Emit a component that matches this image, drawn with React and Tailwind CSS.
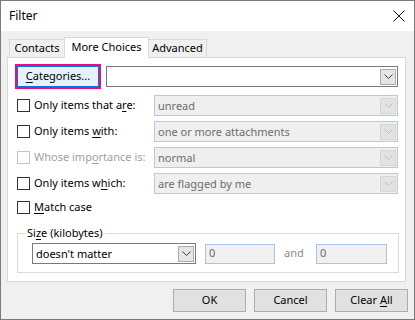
import React from 'react';

function Chevron({ disabled }) {
  return (
    <svg width="9" height="5" viewBox="0 0 9 5" className="block">
      <path d="M0.5 0.5 L4.5 4.5 L8.5 0.5" fill="none" stroke={disabled ? '#bdbdbd' : '#3c3c3c'} strokeWidth="1" />
    </svg>
  );
}

function Combo({ text, disabled, className = '' }) {
  return (
    <div
      className={`flex items-center justify-between border ${
        disabled ? 'border-[#b7c9dd] bg-[#efefef] text-[#6d6d6d]' : 'border-[#7a7a7a] bg-white text-black'
      } ${className}`}
    >
      <span className="overflow-hidden whitespace-nowrap pl-[3px] leading-[16px]">{text}</span>
      <div
        className={`mr-[1px] flex h-[16px] w-[16px] shrink-0 items-center justify-center border ${
          disabled ? 'border-[#d6d6d6] bg-[#e3e3e3]' : 'border-[#acacac] bg-[#e5e5e5]'
        }`}
      >
        <Chevron disabled={disabled} />
      </div>
    </div>
  );
}

function Check({ disabled }) {
  return (
    <div
      className={`h-[13px] w-[13px] shrink-0 border bg-white ${disabled ? 'border-[#c4c4c4]' : 'border-[#333333]'}`}
    />
  );
}

function U({ children }) {
  return <span className="underline decoration-1 underline-offset-[2px]">{children}</span>;
}

const rows = [
  { label: <>Only items that a<U>r</U>e:</>, value: 'unread', mt: 'mt-[6px]' },
  { label: <>Only items <U>w</U>ith:</>, value: 'one or more attachments', mt: 'mt-[5px]' },
  { label: <>Whose imp<U>o</U>rtance is:</>, value: 'normal', mt: 'mt-[5px]', off: true },
  { label: <>Only items w<U>h</U>ich:</>, value: 'are flagged by me', mt: 'mt-[5px]' },
];

export default function App() {
  return (
    <div className="flex h-[320px] w-[415px] flex-col border border-[#7a7a7a] bg-[#f0f0f0] font-['Noto_Sans',sans-serif] text-[11px] text-black">
      <div className="flex h-[30px] shrink-0 items-center justify-between bg-white pl-[8px] pr-[9px] text-[12px]">
        <span>Filter</span>
        <svg width="12" height="12" viewBox="0 0 12 12">
          <path d="M0.5 0.5 L11.5 11.5 M11.5 0.5 L0.5 11.5" stroke="#111" strokeWidth="1" />
        </svg>
      </div>

      <div className="px-[6px] pt-[6px]">
        <div className="flex items-end pl-[2px]">
          <div className="flex h-[18px] w-[55px] items-center justify-center border border-b-0 border-r-0 border-[#d9d9d9]">
            <span>Contacts</span>
          </div>
          <div className="relative z-10 -mb-[1px] flex h-[21px] w-[85px] items-start justify-center border border-b-0 border-[#d9d9d9] bg-white pt-[1px]">
            <span>More Choices</span>
          </div>
          <div className="flex h-[18px] w-[58px] items-center justify-center border border-b-0 border-l-0 border-[#d9d9d9]">
            <span>Advanced</span>
          </div>
        </div>

        <div className="h-[225px] w-[399px] border border-[#d9d9d9] bg-white pl-[7px] pt-[6px]">
          <div className="flex h-[25px] items-center">
            <div className="h-[25px] w-[86px] border-2 border-[#f5097e]">
              <div className="flex h-full w-full items-center justify-center border border-[#0078d7] bg-[#e5f1fb]">
                <span><U>C</U>ategories...</span>
              </div>
            </div>
            <Combo className="ml-[5px] h-[21px] w-[292px]" text="" />
          </div>

          {rows.map((r, i) => (
            <div key={i} className={`flex h-[21px] items-center ${r.mt}`}>
              <div className={`ml-[2px] flex w-[137px] items-center gap-[4px] ${r.off ? 'text-[#a0a0a0]' : ''}`}>
                <Check disabled={r.off} />
                <span className="whitespace-nowrap">{r.label}</span>
              </div>
              <Combo disabled className="h-[21px] w-[244px]" text={r.value} />
            </div>
          ))}

          <div className="mt-[3px] flex h-[21px] items-center gap-[4px] pl-[2px]">
            <Check />
            <span><U>M</U>atch case</span>
          </div>

          <div className="relative ml-[2px] mt-[15px] h-[40px] w-[382px] border border-[#dcdcdc] pl-[14px] pt-[9px]">
            <span className="absolute left-[7px] top-[-9px] bg-white px-[2px]">
              Si<U>z</U>e (kilobytes)
            </span>
            <div className="flex items-center">
              <Combo className="h-[21px] w-[164px]" text="doesn't matter" />
              <div className="ml-[9px] flex h-[20px] w-[70px] items-center border border-[#aac4e4] bg-[#f0f0f0] pl-[3px] text-[#6d6d6d]">0</div>
              <span className="ml-[9px] w-[32px] text-[#8a8a8a]">and</span>
              <div className="flex h-[20px] w-[71px] items-center border border-[#aac4e4] bg-[#f0f0f0] pl-[3px] text-[#6d6d6d]">0</div>
            </div>
          </div>
        </div>

        <div className="mt-[7px] flex justify-end gap-[8px]">
          {[<span>OK</span>, <span>Cancel</span>, <span>Clear <U>A</U>ll</span>].map((t, i) => (
            <button key={i} className="flex h-[23px] w-[73px] items-center justify-center border border-[#adadad] bg-[#e1e1e1]">
              {t}
            </button>
          ))}
        </div>
      </div>
    </div>
  );
}
